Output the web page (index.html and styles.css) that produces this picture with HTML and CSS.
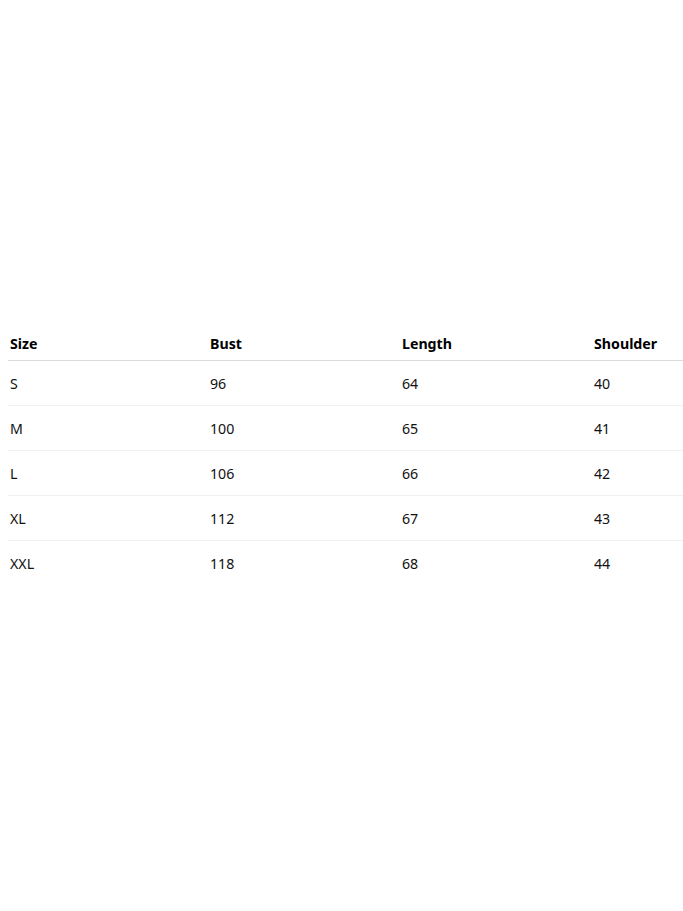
FILE: index.html
```html
<!DOCTYPE html>
<html lang="en">
<head>
<meta charset="utf-8">
<title>Size chart</title>
<link rel="stylesheet" href="styles.css">
</head>
<body>
<main class="page">
  <table class="size-table">
    <thead>
      <tr><th>Size</th><th>Bust</th><th>Length</th><th>Shoulder</th></tr>
    </thead>
    <tbody>
      <tr><td>S</td><td>96</td><td>64</td><td>40</td></tr>
      <tr><td>M</td><td>100</td><td>65</td><td>41</td></tr>
      <tr><td>L</td><td>106</td><td>66</td><td>42</td></tr>
      <tr><td>XL</td><td>112</td><td>67</td><td>43</td></tr>
      <tr><td>XXL</td><td>118</td><td>68</td><td>44</td></tr>
    </tbody>
  </table>
</main>
</body>
</html>
```
FILE: styles.css
```css
html, body {
  margin: 0;
  padding: 0;
  background: #fff;
  overflow: hidden;
}
body {
  font-family: "Noto Sans", "Open Sans", sans-serif;
  color: #111;
}
.page {
  min-height: 911px;
  display: flex;
  align-items: center;
  padding-left: 8px;
  box-sizing: border-box;
}
.size-table {
  border-collapse: collapse;
  table-layout: fixed;
  width: 675px;
  flex: none;
  font-size: 14.2px;
}
.size-table th,
.size-table td {
  text-align: left;
  padding: 0 2px;
  overflow: hidden;
  white-space: nowrap;
  box-sizing: border-box;
}
.size-table th:nth-child(1) { width: 200px; }
.size-table th:nth-child(2),
.size-table th:nth-child(3) { width: 192px; }
.size-table th:nth-child(4) { width: 91px; }
.size-table th {
  font-weight: 700;
  height: 35px;
  padding-top: 1px;
  border-bottom: 1px solid #dcdcdc;
  color: #000;
}
.size-table td {
  height: 45px;
  border-bottom: 1px solid #f0f0f0;
}
.size-table tbody tr:last-child td {
  border-bottom: none;
}
```
